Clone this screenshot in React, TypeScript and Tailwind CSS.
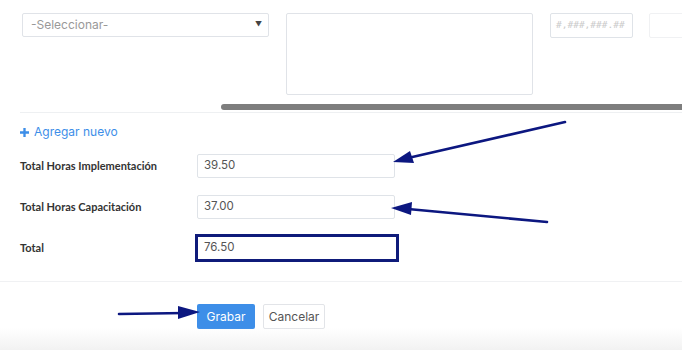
import React from 'react';

const font = { fontFamily: 'Inter, "Noto Sans", sans-serif' };

const Arrows: React.FC = () => (
	<svg className="pointer-events-none absolute left-0 top-0" width={682} height={350} viewBox="0 0 682 350">
		<g stroke="#0c1780" strokeWidth={2.6} strokeLinecap="round" fill="#0c1780">
			<line x1={565} y1={122} x2={408} y2={158} />
			<polygon points="393,162 410,151 414,163" stroke="none" />
			<line x1={547} y1={222} x2={408} y2={209} />
			<polygon points="391,208 412,202 411,215" stroke="none" />
			<line x1={119} y1={314} x2={185} y2={313} />
			<polygon points="200,312 178,306 178,319" stroke="none" />
		</g>
	</svg>
);

const Field: React.FC<{ label: string; value: string; highlight?: boolean }> = ({ label, value, highlight }) => (
	<div className="flex items-center h-[24px]">
		<div className="w-[177px] text-[11px] font-bold text-[#333]" style={{ fontFamily: 'Lato, sans-serif' }}>{label}</div>
		{highlight ? (
			<div className="-ml-[2px] border-[3px] border-[#0f1b7a] w-[204px] h-[28px] flex items-center">
				<div className="flex h-full w-full items-center pl-[6px] text-[11.5px] text-[#555]">{value}</div>
			</div>
		) : (
			<div className="w-[198px] h-[24px] border border-[#dfe3e8] rounded-[2px] flex items-center pl-[6px] text-[11.5px] text-[#555]">
				{value}
			</div>
		)}
	</div>
);

export default function App() {
	return (
		<div className="relative w-[682px] h-[350px] overflow-hidden bg-white" style={font}>
			<div className="flex items-start pt-[13px] pl-[22px] gap-[17px] h-[104px]">
				<div className="w-[247px] h-[24px] shrink-0 border border-[#e0e3e8] rounded-[2px] flex items-center justify-between pl-[8px] pr-[8px]">
					<span className="text-[12px] text-[#999]">-Seleccionar-</span>
					<span className="text-[7px] text-[#444] mr-[-2px]">▼</span>
				</div>
				<div className="w-[247px] h-[82px] shrink-0 border border-[#e0e3e8] rounded-[2px]" />
				<div className="w-[83px] h-[25px] shrink-0 border border-[#dfe3e8] rounded-[2px] flex items-center pl-[5px] text-[9.5px] text-[#cacaca]" style={{ fontFamily: '"DejaVu Sans Mono", monospace' }}>
					#,###,###.##
				</div>
				<div className="w-[83px] h-[25px] shrink-0 border border-[#f0f1f3] rounded-[2px] -ml-[1px]" />
			</div>
			<div className="ml-[221px] h-[6px] rounded-l-full bg-[#7e7e7e]" />
			<div className="ml-[20px] mt-[2px] h-px bg-[#eef0f2]" />
			<div className="flex items-center gap-[5px] pl-[20px] mt-[10px] text-[12px] text-[#3d8ee8]">
				<svg width={9} height={9} viewBox="0 0 10 10"><path d="M3.7 0h2.6v3.7H10v2.6H6.3V10H3.7V6.3H0V3.7h3.7z" fill="#3d8ee8" /></svg>
				<span>Agregar nuevo</span>
			</div>
			<div className="flex flex-col pl-[20px] mt-[13px] gap-[17px]">
				<Field label="Total Horas Implementación" value="39.50" />
				<Field label="Total Horas Capacitación" value="37.00" />
				<Field label="Total" value="76.50" highlight />
			</div>
			<div className="mt-[21px] h-px bg-[#f0f1f3]" />
			<div className="flex gap-[8px] pl-[197px] mt-[22px]">
				<button className="w-[58px] h-[25px] bg-[#3d8ee8] rounded-[2px] text-[12px] text-white">Grabar</button>
				<button className="w-[62px] h-[25px] bg-white border border-[#e2e4e8] rounded-[2px] text-[12px] text-[#555]">Cancelar</button>
			</div>
			<div className="absolute left-0 right-0 bottom-0 h-[22px] bg-gradient-to-b from-white/0 to-[#f2f2f2]" />
			<Arrows />
		</div>
	);
}
